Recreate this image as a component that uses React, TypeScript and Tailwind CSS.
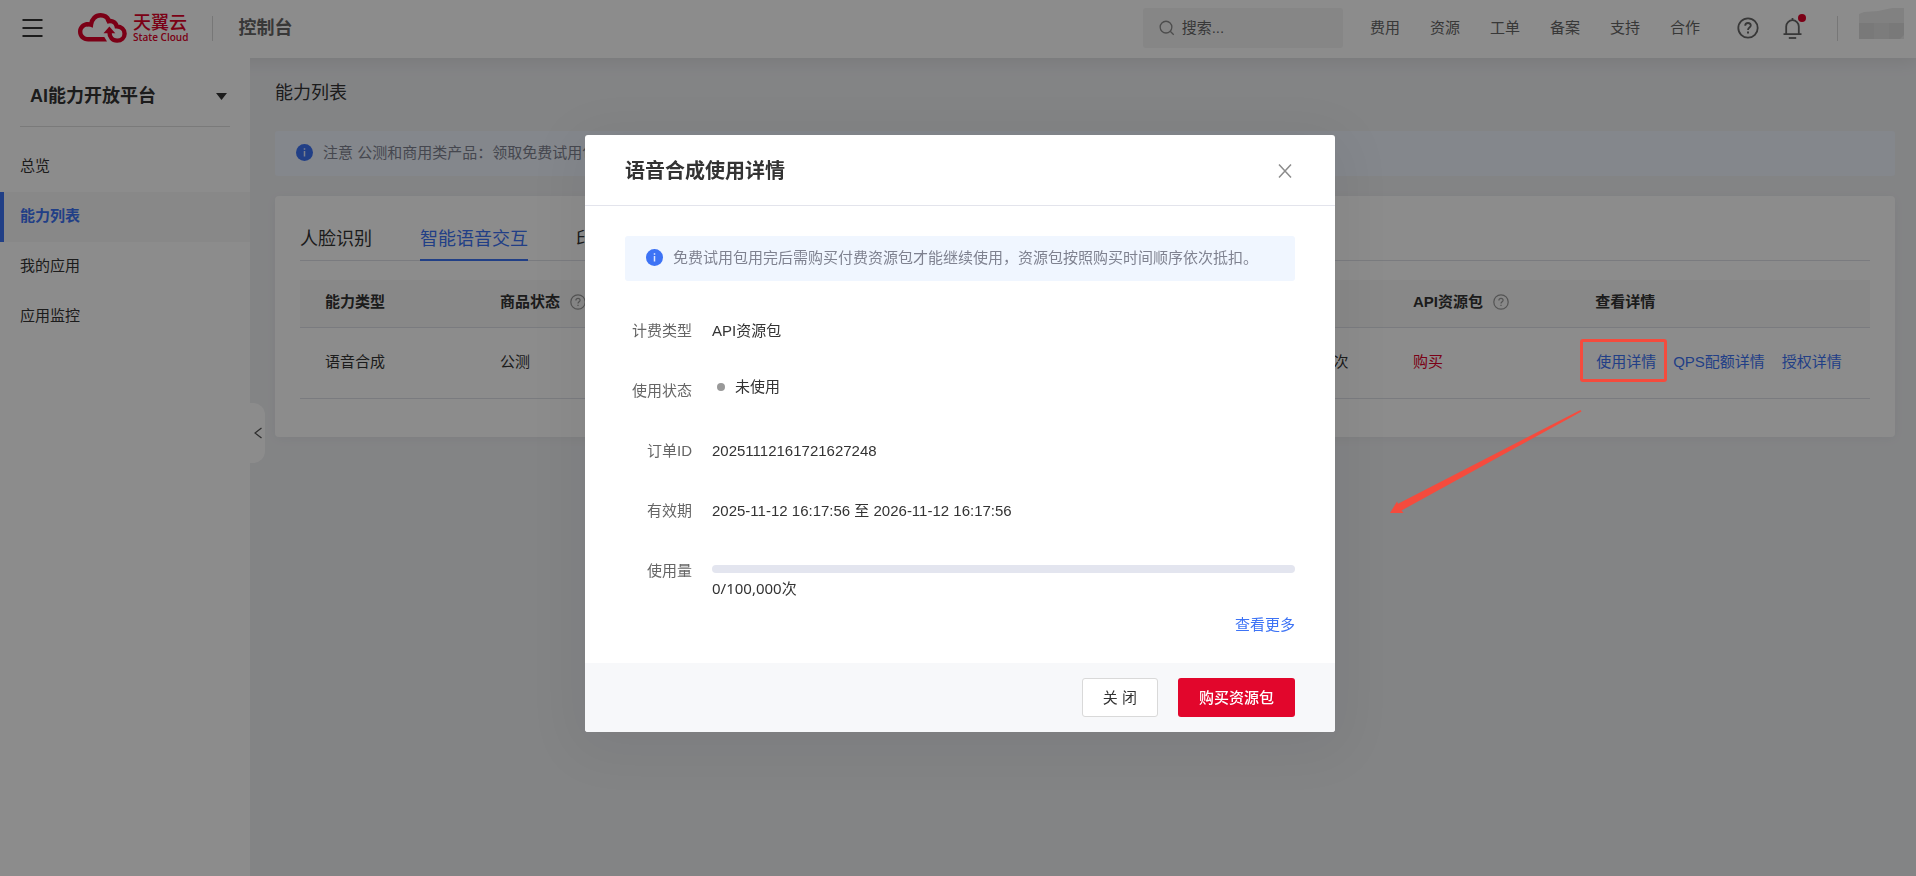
import { ReactNode } from "react";

const NAV_LINKS = ["费用", "资源", "工单", "备案", "支持", "合作"];

const MENU_ITEMS = ["总览", "能力列表", "我的应用", "应用监控"];

const TABS = ["人脸识别", "智能语音交互", "印刷文字识别", "自然语言处理"];

export default function App() {
  return (
    <div className="min-h-screen flex flex-col bg-[#eff0f3] text-[15px] leading-6 text-[#333] font-['Liberation_Sans','Noto_Sans_CJK_SC',sans-serif]">
      <Header />
      <div className="flex flex-1">
        <Sidebar />
        <main className="flex-1 min-w-0 pl-[25px] pr-[21px] pt-[21px]">
          <h1 className="text-lg leading-7">能力列表</h1>
          <div className="mt-6">
            <Notice>
              注意 公测和商用类产品：领取免费试用包后即可使用对应能力。
            </Notice>
          </div>
          <AbilityCard />
        </main>
      </div>
      <UsageDialog />
    </div>
  );
}

function Header() {
  return (
    <header className="relative h-[58px] flex items-center bg-white pl-[22px] pr-3 pb-0.5 shadow-[0_4px_16px_rgba(0,0,0,0.08)]">
      <button type="button" aria-label="菜单">
        <svg width="21" height="18" viewBox="0 0 21 18" stroke="#333" strokeWidth="2">
          <path d="M0.500 1h20M0.500 9h20M0.500 17h20" />
        </svg>
      </button>
      <a href="#" className="ml-[35px] flex items-center gap-[6px] text-[#e00028]">
        <CloudLogo />
        <span className="flex flex-col">
          <span className="text-[18px] leading-[18px] font-medium">天翼云</span>
          <span className="text-[10px] leading-[10px] font-semibold font-['Open_Sans',sans-serif]">
            State Cloud
          </span>
        </span>
      </a>
      <span className="ml-6 w-px h-[25px] bg-[#d9d9d9]" />
      <span className="ml-[25px] text-lg font-bold text-[#666]">控制台</span>
      <label className="ml-auto w-[200px] h-10 flex items-center gap-[7px] rounded-[3px] bg-[#f5f5f5] pl-4">
        <svg width="18" height="18" viewBox="0 0 18 18" fill="none" stroke="#8c8c8c" strokeWidth="1.500">
          <circle cx="8" cy="8" r="6.700" />
          <path d="M12.800 12.800l4 4" />
        </svg>
        <input
          type="text"
          aria-label="搜索"
          placeholder="搜索..."
          className="w-full bg-transparent outline-none placeholder:text-[#666]"
        />
      </label>
      <nav className="ml-[27px] flex gap-[30px]">
        {NAV_LINKS.map((link) => (
          <a key={link} href="#" className="text-[#666]">
            {link}
          </a>
        ))}
      </nav>
      <button type="button" aria-label="帮助" className="ml-[37px]">
        <svg width="22" height="22" viewBox="0 0 22 22" fill="none" stroke="#666" strokeWidth="1.800">
          <circle cx="11" cy="11" r="9.700" />
          <path d="M8.200 8.800c0-1.700 1.200-2.800 2.800-2.800s2.800 1.100 2.800 2.600c0 1.900-2.800 2.100-2.800 4.300" />
          <path d="M11 14.500v2" strokeWidth="2" />
        </svg>
      </button>
      <button type="button" aria-label="消息" className="relative ml-6">
        <svg width="19" height="21" viewBox="0 0 19 21" fill="none" stroke="#666" strokeWidth="1.800">
          <path d="M9.500 0v2.500M3.200 16V8.500a6.300 6.300 0 0 1 12.600 0V16M0.500 16.200h18" />
          <path d="M5.800 20h7.400" />
        </svg>
        <span className="absolute -top-1 -right-1 size-2 rounded-full bg-[#e00028]" />
      </button>
      <span className="ml-[35px] w-px h-[25px] bg-[#d9d9d9]" />
      <Avatar />
    </header>
  );
}

function CloudLogo() {
  return (
    <svg width="49" height="30" viewBox="0 0 49 30" fill="none" stroke="currentColor" strokeWidth="4.400">
      <path d="M29 28.400H10.200C4.300 28.400 0 24.200 0 18.700 0 13.500 4 9.300 9.300 9l1 4.300c-3.500.2-5.900 2.400-5.900 5.400 0 3.200 2.500 5.300 5.900 5.300h16z" fill="currentColor" stroke="none" />
      <path d="M8.500 11.300c1.600-.2 3-.1 4.500.4.700-5.500 4.600-9.400 9.600-9.400 3.600 0 6.700 1.900 8.300 5.100" />
      <path d="M28.500 8.800c4-2 9.200-.3 10.200 4.600 4.700.3 7.900 3.300 7.900 7.300 0 3.900-3.200 6.900-7.500 6.900-4.800 0-7.700-3.400-7.700-9.100" />
      <path d="M25.500 20.200l5.900-6.800 5.900 6.800z" fill="currentColor" stroke="none" />
    </svg>
  );
}

function Avatar() {
  return (
    <svg width="45" height="40" viewBox="0 0 45 40" className="ml-[21px]">
      <path d="M0 6l5-2 14-1L33 0h12v31H0z" fill="#ececec" />
      <path d="M0 15h45v12l-4 4H0z" fill="#dcdcdc" />
      <path d="M15 15h15v16H15z" fill="#e2e2e2" />
    </svg>
  );
}

function Sidebar() {
  return (
    <aside className="relative w-[250px] shrink-0 bg-white">
      <button
        type="button"
        className="mx-5 w-[210px] h-[69px] flex items-center justify-between border-b border-[#dfdfdf] pl-[10px] pr-[3px] pt-2"
      >
        <span className="text-lg font-bold">AI能力开放平台</span>
        <svg width="11" height="7" viewBox="0 0 11 7" fill="#333">
          <path d="M0 0h11L5.500 7z" />
        </svg>
      </button>
      <nav className="mt-[15px] flex flex-col">
        {MENU_ITEMS.map((item) => (
          <a
            key={item}
            href="#"
            className={
              item === "能力列表"
                ? "h-[50px] flex items-center border-l-4 border-[#3d73f5] bg-[#f7f7f7] pl-4 pb-0.5 font-bold text-[#3d73f5]"
                : "h-[50px] flex items-center pl-5 pb-0.5"
            }
          >
            {item}
          </a>
        ))}
      </nav>
      <button
        type="button"
        aria-label="收起"
        className="absolute left-full top-[345px] w-[15px] h-[60px] flex items-center justify-center rounded-r-[12px] bg-white"
      >
        <svg width="8" height="12" viewBox="0 0 8 12" fill="none" stroke="#555" strokeWidth="1.300">
          <path d="M7.500 1L1 6l6.500 5" />
        </svg>
      </button>
    </aside>
  );
}

function Notice({ children }: { children: ReactNode }) {
  return (
    <div className="h-[45px] flex items-center gap-[10px] rounded-[3px] bg-[#f0f6ff] pl-[21px] pb-0.5 text-[#7f8290]">
      <svg width="17" height="17" viewBox="0 0 17 17" className="shrink-0">
        <circle cx="8.500" cy="8.500" r="8.500" fill="#3d73f5" />
        <path d="M8.500 4.300v1.500M8.500 7v5.500" stroke="#dfe8ff" strokeWidth="1.500" />
      </svg>
      <span>{children}</span>
    </div>
  );
}

function QuestionMark() {
  return (
    <svg width="16" height="16" viewBox="0 0 16 16" fill="none" stroke="#999" strokeWidth="1.200">
      <circle cx="8" cy="8" r="7.200" />
      <path d="M5.900 6.400c0-1.200.9-2 2.100-2s2.100.8 2.100 1.900c0 1.400-2.100 1.500-2.100 3.200M8 10.700v1.300" />
    </svg>
  );
}

function AbilityCard() {
  return (
    <section className="mt-5 rounded-[4px] bg-white px-[25px] pt-5 pb-[38px] shadow-[0_2px_12px_rgba(0,0,0,0.04)]">
      <div className="flex gap-12 border-b border-[#dfe1e8]">
        {TABS.map((tab) => (
          <button
            key={tab}
            type="button"
            className={
              tab === "智能语音交互"
                ? "-mb-px h-[45px] border-b-2 border-[#3d73f5] pt-0.5 text-lg text-[#3d73f5]"
                : "-mb-px h-[45px] border-b-2 border-transparent pt-0.5 text-lg"
            }
          >
            {tab}
          </button>
        ))}
      </div>
      <table className="mt-[19px] w-full table-fixed text-left">
        <colgroup>
          <col className="w-[11.150%]" />
          <col className="w-[20%]" />
          <col />
          <col className="w-[9.500%]" />
          <col className="w-[11.600%]" />
          <col className="w-[19.100%]" />
        </colgroup>
        <thead>
          <tr className="h-[47px] border-b border-[#dfe1e8] bg-[#f7f7f7]">
            <th className="pl-[25px] pb-0.5">能力类型</th>
            <th className="pl-[25px] pb-0.5">
              <span className="flex items-center gap-[10px]">
                商品状态
                <QuestionMark />
              </span>
            </th>
            <th className="pl-[25px] pb-0.5">计费方式</th>
            <th className="pl-[25px] pb-0.5">用量</th>
            <th className="pl-[25px] pb-0.5">
              <span className="flex items-center gap-[10px]">
                API资源包
                <QuestionMark />
              </span>
            </th>
            <th className="pl-[25px] pb-0.5">查看详情</th>
          </tr>
        </thead>
        <tbody>
          <tr className="h-[71px] border-b border-[#dfe1e8]">
            <td className="pl-[25px] pb-0.5">语音合成</td>
            <td className="pl-[25px] pb-0.5">公测</td>
            <td className="pl-[25px] pb-0.5">资源包</td>
            <td className="pl-[25px] pb-0.5">
              <Quota />
            </td>
            <td className="pl-[25px] pb-0.5">
              <a href="#" className="text-[#e00028]">
                购买
              </a>
            </td>
            <td className="pl-[26px] pb-0.5 whitespace-nowrap">
              <span className="flex gap-[17px] text-[#3d73f5]">
                <a href="#" className="relative">
                  使用详情
                  <Highlight />
                </a>
                <a href="#">QPS配额详情</a>
                <a href="#">授权详情</a>
              </span>
            </td>
          </tr>
        </tbody>
      </table>
    </section>
  );
}

function Quota() {
  return <span className="font-['Noto_Sans','Noto_Sans_CJK_SC',sans-serif]">0/100,000次</span>;
}

// frame round the link and the arrow under it, both above the mask
function Highlight() {
  return (
    <>
      <span className="absolute z-50 -left-4 -top-[11px] w-[87px] h-[43px] rounded-[3px] border-3 border-[#f54b3d]" />
      <svg
        width="192"
        height="104"
        viewBox="0 0 192 104"
        fill="#f54b3d"
        className="absolute z-50 right-full top-[60px] mr-[14px] max-w-none"
      >
        <path d="M190.500 0l1 1.500L11.500 100.500l2 2.500H0l7-11.500 1 2.200z" />
      </svg>
    </>
  );
}

function UsageDialog() {
  return (
    <div className="fixed inset-0 z-40 flex items-start justify-center bg-black/45 pt-[135px] pl-1">
      <div
        role="dialog"
        aria-label="语音合成使用详情"
        className="w-[750px] overflow-hidden rounded-[3px] bg-white shadow-[0_10px_60px_16px_rgba(0,0,0,0.06)]"
      >
        <div className="h-[71px] flex items-center justify-between border-b border-[#e3e4ec] pl-10 pr-[43px] pt-0.5">
          <h2 className="text-xl font-bold">语音合成使用详情</h2>
          <button type="button" aria-label="关闭">
            <svg width="14" height="14" viewBox="0 0 14 14" stroke="#8c8c8c" strokeWidth="1.500">
              <path d="M1 0.500l12 13M13 0.500l-12 13" />
            </svg>
          </button>
        </div>
        <div className="px-10 pt-[30px] pb-[26px]">
          <Notice>免费试用包用完后需购买付费资源包才能继续使用，资源包按照购买时间顺序依次抵扣。</Notice>
          <dl className="mt-5">
            <DetailRow label="计费类型">API资源包</DetailRow>
            <DetailRow label="使用状态">
              <span className="flex items-center gap-[10px] pl-[5px] pb-2">
                <span className="size-2 rounded-full bg-[#999]" />
                未使用
              </span>
            </DetailRow>
            <DetailRow label="订单ID">20251112161721627248</DetailRow>
            <DetailRow label="有效期">2025-11-12 16:17:56 至 2026-11-12 16:17:56</DetailRow>
            <DetailRow label="使用量">
              <div className="pt-6">
                <div className="h-2 rounded-full bg-[#e3e5ef]" />
                <div className="mt-[3px]">
                  <Quota />
                </div>
              </div>
            </DetailRow>
          </dl>
          <div className="mt-3 text-right">
            <a href="#" className="text-[#3d73f5]">
              查看更多
            </a>
          </div>
        </div>
        <div className="h-[69px] flex items-center justify-end gap-5 bg-[#f7f8fa] px-10">
          <button type="button" className="h-[39px] rounded-[3px] border border-[#d9d9d9] bg-white px-5">
            关 闭
          </button>
          <button type="button" className="h-[39px] rounded-[3px] bg-[#e2062c] px-[21px] font-medium text-white">
            购买资源包
          </button>
        </div>
      </div>
    </div>
  );
}

function DetailRow({ label, children }: { label: string; children: ReactNode }) {
  return (
    <div className="h-[60px] flex items-center">
      <dt className="w-[67px] mr-5 shrink-0 text-right text-[#666]">{label}</dt>
      <dd className="flex-1">{children}</dd>
    </div>
  );
}
